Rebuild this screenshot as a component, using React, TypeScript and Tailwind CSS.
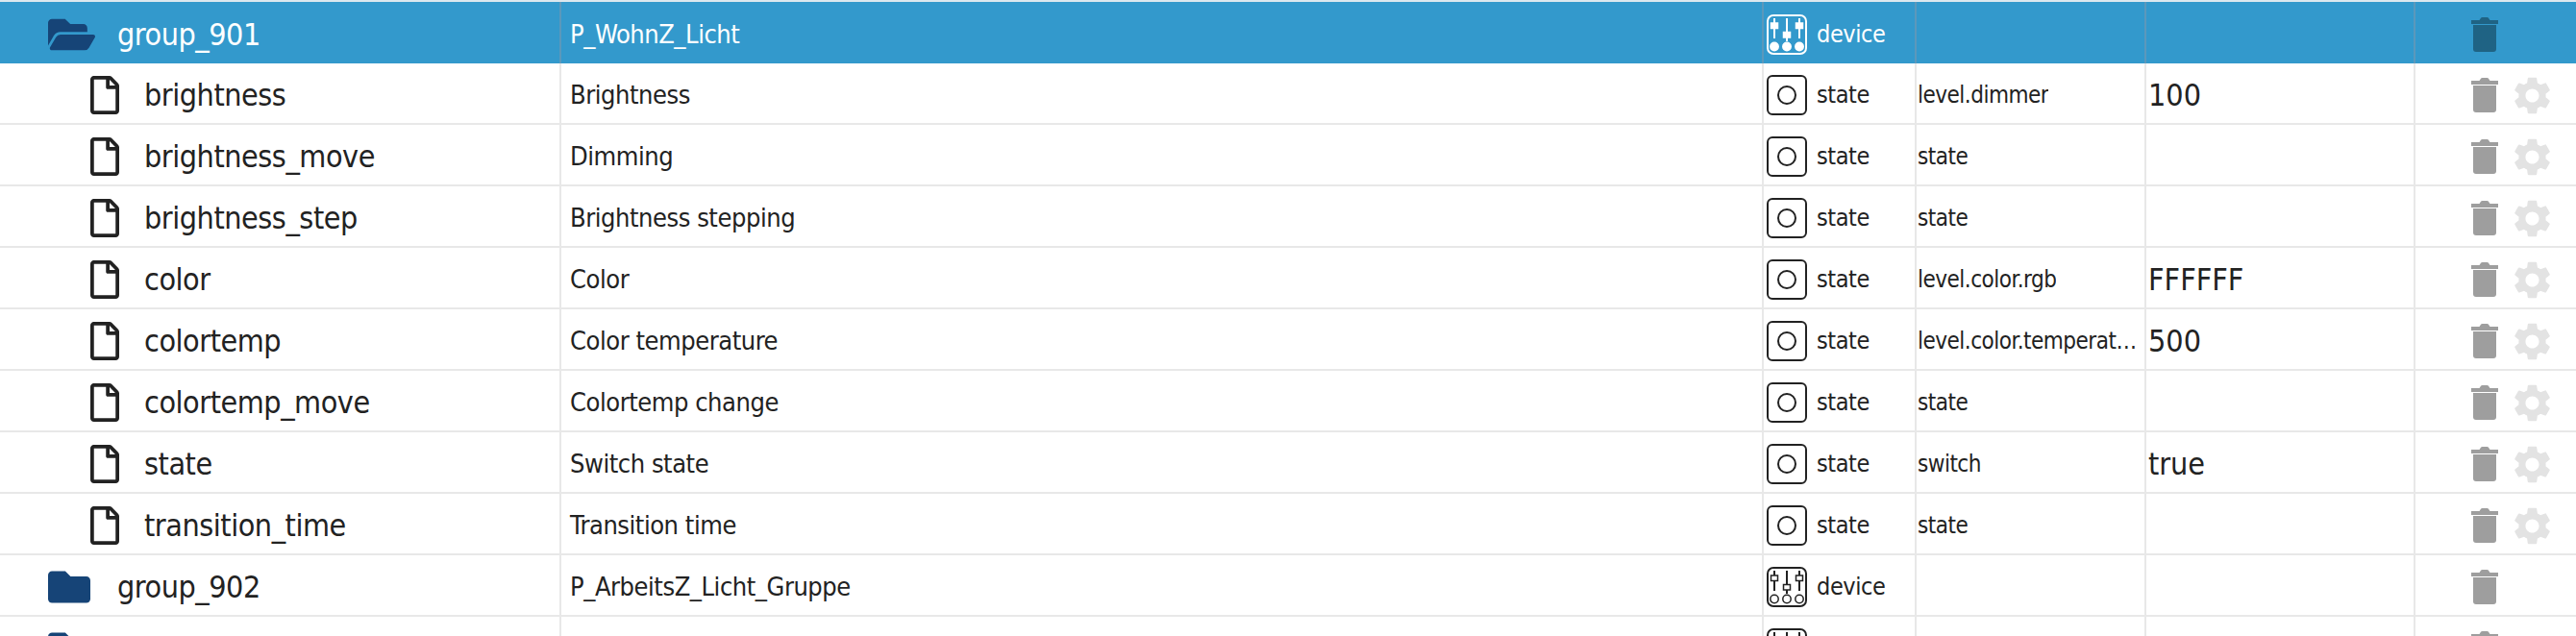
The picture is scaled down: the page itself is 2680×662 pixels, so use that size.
import React from "react";
import { FaFolder, FaFolderOpen, FaRegFile } from "react-icons/fa";
import { MdSettings } from "react-icons/md";

type Row = {
    name: string;
    title: string;
    kind: "folder" | "folderOpen" | "state";
    role?: string;
    value?: string;
    selected?: boolean;
};

const rows: Row[] = [
    { name: "group_901", title: "P_WohnZ_Licht", kind: "folderOpen", selected: true },
    { name: "brightness", title: "Brightness", kind: "state", role: "level.dimmer", value: "100" },
    { name: "brightness_move", title: "Dimming", kind: "state", role: "state" },
    { name: "brightness_step", title: "Brightness stepping", kind: "state", role: "state" },
    { name: "color", title: "Color", kind: "state", role: "level.color.rgb", value: "FFFFFF" },
    { name: "colortemp", title: "Color temperature", kind: "state", role: "level.color.temperature", value: "500" },
    { name: "colortemp_move", title: "Colortemp change", kind: "state", role: "state" },
    { name: "state", title: "Switch state", kind: "state", role: "switch", value: "true" },
    { name: "transition_time", title: "Transition time", kind: "state", role: "state" },
    { name: "group_902", title: "P_ArbeitsZ_Licht_Gruppe", kind: "folder" },
    { name: "group_903", title: "", kind: "folder" },
];

const StateIcon = () => (
    <svg viewBox="0 0 42 42" className="w-[42px] h-[42px] shrink-0" fill="none" stroke="currentColor" strokeWidth="2">
        <rect x="1" y="1" width="40" height="40" rx="5" />
        <circle cx="21" cy="21" r="9" />
    </svg>
);

const DeviceIcon = ({ filled }: { filled: boolean }) => (
    <svg viewBox="0 0 42 42" className="w-[42px] h-[42px] shrink-0" fill="none" stroke="currentColor" strokeWidth="2">
        <rect x="1" y="1" width="40" height="40" rx="6" />
        <path d="M8 4v21M21 4v24M34 4v21" />
        <g fill={filled ? "currentColor" : "#ffffff"} strokeWidth="1.5">
            <rect x="4.500" y="9" width="7" height="5.500" />
            <rect x="17.500" y="18.500" width="7" height="5.500" />
            <rect x="30.500" y="9" width="7" height="5.500" />
        </g>
        <g fill={filled ? "currentColor" : "none"} strokeWidth="1.5">
            <circle cx="8" cy="33.500" r="4.200" />
            <circle cx="21" cy="33.500" r="4.200" />
            <circle cx="34" cy="33.500" r="4.200" />
        </g>
    </svg>
);

const TrashIcon = ({ className }: { className: string }) => (
    <svg viewBox="0 0 28 36" className={`w-[28px] h-[36px] shrink-0 ${className}`} fill="currentColor">
        <path d="M0 3h8.500L10 .8Q10.500 0 11.500 0h5q1 0 1.500.8L19.500 3H28v4H0z" />
        <path d="M2 8h24v25q0 3-3 3H5q-3 0-3-3z" />
    </svg>
);

const TreeRow = ({ row }: { row: Row }) => {
    const isState = row.kind === "state";
    const sel = row.selected;
    const line = sel ? "border-[#5b98bb]" : "border-[#e8e8e8]";
    return (
        <div className={`grid grid-cols-[584px_1251px_159px_239px_280px_1fr] h-[64px] items-stretch font-['DejaVu_Sans',sans-serif] font-stretch-condensed ${sel ? "bg-[#3399cc] text-white" : "text-[#222222] border-b-2 border-[#e8e8e8]"}`}>
            <div className={`flex items-center pt-[4px] border-r-2 ${line} text-[32px] tracking-[-0.45px] ${isState ? "pl-[94px] gap-[26px]" : row.kind === "folder" ? "pl-[50px] gap-[28px]" : "pl-[50px] gap-[23px]"}`}>
                {row.kind === "folderOpen" && <FaFolderOpen size={44} className="text-[#164477] w-[49px] shrink-0" />}
                {row.kind === "folder" && <FaFolder size={44} className="text-[#164477] shrink-0" />}
                {isState && <FaRegFile size={40} className="shrink-0 w-[30px]" />}
                <span>{row.name}</span>
            </div>
            <div className={`flex items-center pt-[4px] pl-[9px] border-r-2 ${line} text-[27px] tracking-[-0.45px]`}>{row.title}</div>
            <div className={`flex items-center pt-[4px] gap-[10px] pl-[3px] border-r-2 ${line} text-[25px] tracking-[-0.4px]`}>
                {isState ? <StateIcon /> : <DeviceIcon filled={!!sel} />}
                <span>{isState ? "state" : "device"}</span>
            </div>
            <div className={`flex items-center pt-[4px] pl-[1px] pr-[3px] border-r-2 ${line} text-[24px] tracking-[-0.5px] min-w-0`}>
                <span className="truncate">{row.role}</span>
            </div>
            <div className={`flex items-center pt-[4px] pl-[2px] border-r-2 ${line} text-[32px]`}>{row.value}</div>
            <div className="flex items-center pt-[4px] pl-[58px] gap-[12px]">
                <TrashIcon className={sel ? "text-[#1f6384]" : "text-[#9e9e9e]"} />
                {isState && <MdSettings size={47} className="text-[#e3e3e3] shrink-0" />}
            </div>
        </div>
    );
};

const App: React.FC = () => {
    return (
        <div className="bg-white h-[662px] overflow-hidden border-t-2 border-[#dbe8ef]">
            {rows.map((row) => (
                <TreeRow key={row.name} row={row} />
            ))}
        </div>
    );
};

export default App;
